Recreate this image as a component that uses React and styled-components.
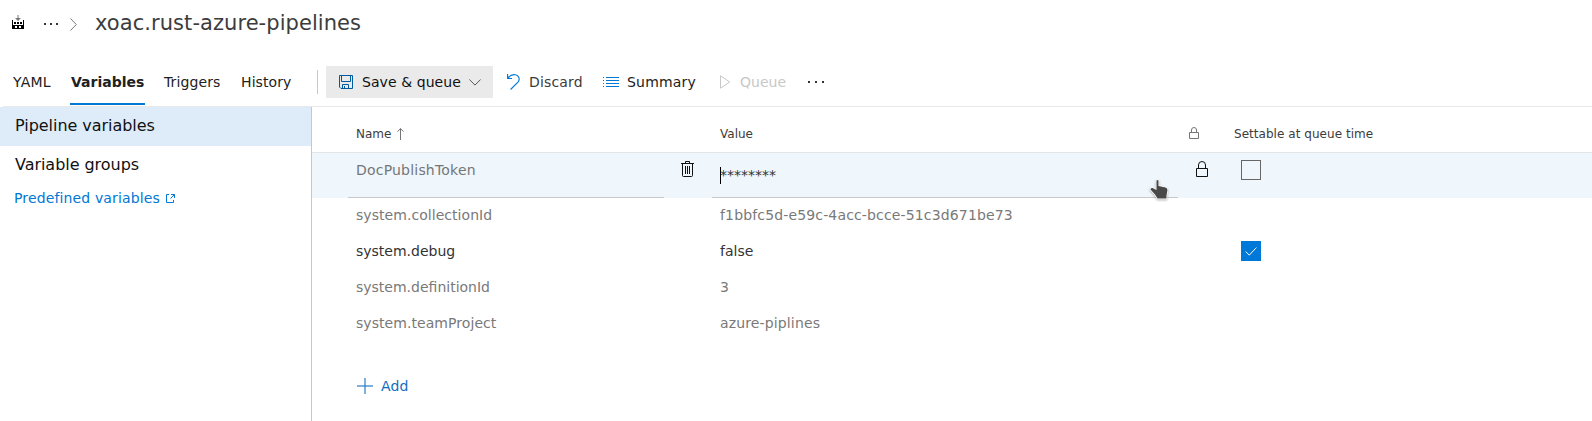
import React from 'react';
import styled, { createGlobalStyle } from 'styled-components';

const GlobalStyle = createGlobalStyle`
  * { box-sizing: border-box; }
  body {
    margin: 0;
    background: #fff;
    color: #212121;
    font: 14px/20px "DejaVu Sans", sans-serif;
    overflow: hidden;
  }
  svg { display: block; flex: none; }
`;

const Page = styled.div`
  height: 421px;
  display: flex;
  flex-direction: column;
`;

const Header = styled.header`
  height: 46px;
  display: flex;
  align-items: center;
  padding-left: 12px;
`;

const Logo = styled.div`
  padding-bottom: 2px;
`;

const Title = styled.h1`
  margin: 0 0 0 18px;
  font-size: 21px;
  line-height: 28px;
  font-weight: 400;
  letter-spacing: 0.06px;
  color: #3c3c3c;
  white-space: nowrap;
`;

const Crumb = styled.div`
  display: flex;
  align-items: center;
  padding: 2px 0 0;
  gap: ${(p) => p.$gap || 0}px;
  margin-left: ${(p) => p.$indent || 0}px;
`;

const Toolbar = styled.nav`
  height: 61px;
  margin-left: 3px;
  padding: 14px 0 0 10px;
  display: flex;
  align-items: stretch;
  border-bottom: 1px solid #e8e8e8;
`;

const Tab = styled.div`
  width: ${(p) => p.$width}px;
  margin-right: 19px;
  height: 45px;
  padding: 12px 0 0 ${(p) => (p.$active ? 1 : 0)}px;
  white-space: nowrap;
  letter-spacing: ${(p) => p.$spacing || 0}px;
  font-weight: ${(p) => (p.$active ? 700 : 400)};
  border-bottom: 2px solid ${(p) => (p.$active ? '#0078d4' : 'transparent')};
`;

const Divider = styled.div`
  width: 1px;
  height: 24px;
  margin: 10px 8px 0 6px;
  background: #c8c8c8;
`;

const Command = styled.div`
  width: ${(p) => p.$width}px;
  height: 32px;
  margin-top: 6px;
  padding-left: ${(p) => p.$pad}px;
  display: flex;
  align-items: center;
  gap: ${(p) => p.$gap}px;
  white-space: nowrap;
  background: ${(p) => (p.$filled ? '#eaeaea' : 'transparent')};
  color: ${(p) => p.$color || '#212121'};
`;

const Label = styled.span`
  width: ${(p) => (p.$width ? `${p.$width}px` : 'auto')};
  letter-spacing: ${(p) => p.$spacing || 0}px;
`;

const Body = styled.div`
  flex: 1;
  display: flex;
`;

const Sidebar = styled.aside`
  width: 312px;
  border-right: 1px solid #c8c8c8;
`;

const SideItem = styled.div`
  height: 39px;
  padding-left: 15px;
  font-size: 16px;
  line-height: 37px;
  letter-spacing: -0.04px;
  color: #111;
  background: ${(p) => (p.$active ? '#deecf9' : 'transparent')};
`;

const SideLink = styled.a`
  display: flex;
  align-items: center;
  gap: 6px;
  height: 26px;
  padding-left: 14px;
  letter-spacing: 0.14px;
  color: #0078d4;
`;

const Main = styled.main`
  flex: 1;
`;

const Row = styled.div`
  display: grid;
  grid-template-columns: 316px 48px 466px 18px 45px 1fr;
  padding-left: 36px;
  height: 36px;
  color: ${(p) => (p.$strong ? '#333' : '#797979')};
`;

const HeadRow = styled(Row)`
  grid-template-columns: 316px 48px 466px 11px 45px 1fr;
  height: 46px;
  font-size: 12px;
  color: #3c3c3c;
  border-bottom: 1px solid #e5e5e5;
  padding-top: 8px;
`;

const EditRow = styled(Row)`
  height: 45px;
  background: #eff6fc;
`;

const Cell = styled.div`
  display: flex;
  align-items: center;
  padding-left: ${(p) => (p.$flush ? 0 : 8)}px;
  padding-bottom: ${(p) => (p.$plain ? 2 : 0)}px;
  white-space: nowrap;
  letter-spacing: ${(p) => p.$spacing || 0}px;
  gap: 6px;
`;

const TextField = styled.div`
  padding: ${(p) => p.$top}px 0 0 8px;
  border-bottom: 1px solid #c8c8c8;
  color: ${(p) => p.$color};
  letter-spacing: ${(p) => p.$spacing || 0}px;
  display: flex;
`;

const Caret = styled.span`
  width: 1px;
  height: 17px;
  margin: 2px -1px 0 0;
  background: #000;
`;

const IconSlot = styled.div`
  padding: ${(p) => p.$top || 0}px 0 0 ${(p) => p.$left || 0}px;
`;

const Checkbox = styled.div`
  width: 20px;
  height: 20px;
  margin: 7px 0 0;
  border: 1px solid ${(p) => (p.$checked ? '#0078d7' : '#666')};
  background: ${(p) => (p.$checked ? '#0078d7' : 'transparent')};
  display: flex;
  align-items: center;
  justify-content: center;
`;

const AddButton = styled.div`
  display: flex;
  align-items: center;
  gap: 8px;
  margin: 34px 0 0 45px;
  height: 20px;
  letter-spacing: 0.2px;
  color: #106ebe;
`;

const Pointer = styled.div`
  position: absolute;
  left: 1146px;
  top: 176px;
`;

const BuildIcon = () => (
  <svg width="12" height="14" viewBox="0 0 12 14" shapeRendering="crispEdges">
    <path d="M0 5h1v5h10V5h1v9H0z" fill="#000" />
    <path d="M2 7h2v2H2zM5 7h2v2H5zM8 7h2v2H8z" fill="#000" />
    <path d="M3 11h2v2H3zM7 11h2v2H7z" fill="#fff" />
    <path d="M5.500 0h1v3h2.500L6 6 3 3h2.500z" fill="#777" shapeRendering="auto" />
  </svg>
);

const Dots = ({ step = 6, size = 2 }) => (
  <svg width={step * 2 + size} height="2" fill="#333">
    {[0, 1, 2].map((i) => <rect key={i} x={i * step} width={size} height="2" />)}
  </svg>
);

const CrumbChevron = () => (
  <svg width="7" height="13" fill="none" stroke="#777"><path d="M.4.5 6.300 6.500.4 12.500" /></svg>
);

const SaveIcon = () => (
  <svg width="14" height="14" fill="none" stroke="#005a9e">
    <path d="M.5.5h13v13H2L.5 12zM2.500.5v6h9v-6M3.500 13V9.500h6V13M5.500 11v2" />
  </svg>
);

const ChevronDown = () => (
  <svg width="12" height="7" fill="none" stroke="#555"><path d="M.4.5 6 6.100 11.600.5" /></svg>
);

const UndoIcon = () => (
  <svg width="13" height="16" fill="none" stroke="#0078d4" strokeWidth="1.100">
    <path d="M.6 0v4.500H5M.8 4.300C3 1.400 5.800.3 8.300.8c3.600.7 4.900 4.300 2.900 7L3.600 15.500" />
  </svg>
);

const ListIcon = () => (
  <svg width="16" height="10" fill="#0078d4" shapeRendering="crispEdges">
    {[0, 3, 6, 9].map((y) => (
      <g key={y}><rect y={y} width="1" height="1" /><rect x="3" y={y} width="13" height="1" /></g>
    ))}
  </svg>
);

const PlayIcon = () => (
  <svg width="11" height="14" fill="none" stroke="#c8c8c8"><path d="M.5.8v12.400L9.700 7z" /></svg>
);

const ExternalIcon = () => (
  <svg width="9" height="9" fill="none" stroke="#0078d4">
    <path d="M3 .5H.5v8h7V6M5 .5h3.500V4M8.300.7 4.500 4.500" />
  </svg>
);

const SortIcon = () => (
  <svg width="7" height="12" fill="none" stroke="#666" strokeWidth=".9">
    <path d="M3.500 12V.6M.5 3.600l3-3 3 3" />
  </svg>
);

const TrashIcon = () => (
  <svg width="13" height="16" fill="none" stroke="#111">
    <path d="M0 2.500h13M4.500 2V.5h4V2M1.500 3v11.500q0 1 1 1h8q1 0 1-1V3M4.500 5v8M6.500 5v8M8.500 5v8" />
  </svg>
);

const LockIcon = ({ small }) => small ? (
  <svg width="10" height="12" fill="none" stroke="#777">
    <path d="M.5 5.500h9v6h-9zM2.500 5.500V3q0-2.500 2.500-2.500T7.500 3v2.500" />
  </svg>
) : (
  <svg width="12" height="16" fill="none" stroke="#111">
    <path d="M.5 7.500h11v8H.5zM2.500 7.500V4q0-3.500 3.500-3.500T9.500 4v3.500" />
  </svg>
);

const CheckIcon = () => (
  <svg width="12" height="9" fill="none" stroke="#fff"><path d="M.6 4.500l3.700 3.600L11.400.6" /></svg>
);

const PlusIcon = () => (
  <svg width="16" height="16" fill="#7fb1e0" shapeRendering="crispEdges">
    <path d="M0 7h16v2H0zM7 0h2v16H7z" /><path d="M7 7h2v2H7z" fill="#4690d2" />
  </svg>
);

const HandIcon = () => (
  <svg width="26" height="26" viewBox="0 0 26 26">
    <path
      d="M10.500 4.500q1-1 2 0v5.500l7 1.500q2 .5 2 2.500l-1 5.500V22.500H11.500L9 18.500l-4.500-5q0-2 2-1.500l4 2z"
      fill="#484848" stroke="#fff" strokeWidth="1.500" paintOrder="stroke"
      style={{ filter: 'drop-shadow(0 1px 1px rgba(0,0,0,.3))' }}
    />
  </svg>
);

const variables = [
  { name: 'system.collectionId', value: 'f1bbfc5d-e59c-4acc-bcce-51c3d671be73', nameSpacing: 0.05, valueSpacing: 0.15 },
  { name: 'system.debug', value: 'false', settable: true },
  { name: 'system.definitionId', value: '3' },
  { name: 'system.teamProject', value: 'azure-piplines', nameSpacing: 0.06, valueSpacing: 0.14 },
];

export default function App() {
  return (
    <Page>
      <GlobalStyle />
      <Header>
        <Logo><BuildIcon /></Logo>
        <Crumb $indent={20} $gap={12}><Dots /><CrumbChevron /></Crumb>
        <Title>xoac.rust-azure-pipelines</Title>
      </Header>
      <Toolbar>
        <Tab $width={38} $spacing={0.2}>YAML</Tab>
        <Tab $active $width={75}>Variables</Tab>
        <Tab $width={58} $spacing={0.12}>Triggers</Tab>
        <Tab $width={51} $spacing={0.1}>History</Tab>
        <Divider />
        <Command $filled $width={167} $pad={13} $gap={9} $color="#111">
          <SaveIcon /><Label $width={98} $spacing={0.07}>Save &amp; queue</Label><ChevronDown />
        </Command>
        <Command $width={110} $pad={14} $gap={9} $color="#3c3c3c">
          <UndoIcon /><Label $spacing={0.15}>Discard</Label>
        </Command>
        <Command $width={117} $gap={8}><ListIcon /><Label $spacing={0.2}>Summary</Label></Command>
        <Command $width={88} $gap={9} $color="#c8c8c8"><PlayIcon /><Label>Queue</Label></Command>
        <Command><Dots step={7} /></Command>
      </Toolbar>
      <Body>
        <Sidebar>
          <SideItem $active>Pipeline variables</SideItem>
          <SideItem>Variable groups</SideItem>
          <SideLink>Predefined variables<ExternalIcon /></SideLink>
        </Sidebar>
        <Main>
          <HeadRow>
            <Cell>Name<SortIcon /></Cell>
            <span />
            <Cell>Value</Cell>
            <span />
            <IconSlot $top={12}><LockIcon small /></IconSlot>
            <Cell $flush $spacing={0.04}>Settable at queue time</Cell>
          </HeadRow>
          <EditRow>
            <TextField $top={7} $color="#767676" $spacing={0.2}>DocPublishToken</TextField>
            <IconSlot $top={8} $left={17}><TrashIcon /></IconSlot>
            <TextField $top={12} $color="#333"><Caret />********</TextField>
            <IconSlot $top={8} $left={18}><LockIcon /></IconSlot>
            <span />
            <Checkbox />
          </EditRow>
          {variables.map((v) => (
            <Row key={v.name} $strong={v.settable}>
              <Cell $plain $spacing={v.nameSpacing}>{v.name}</Cell>
              <span />
              <Cell $plain $spacing={v.valueSpacing}>{v.value}</Cell>
              <span />
              <span />
              {v.settable && <Checkbox $checked><CheckIcon /></Checkbox>}
            </Row>
          ))}
          <AddButton><PlusIcon />Add</AddButton>
        </Main>
      </Body>
      <Pointer><HandIcon /></Pointer>
    </Page>
  );
}
